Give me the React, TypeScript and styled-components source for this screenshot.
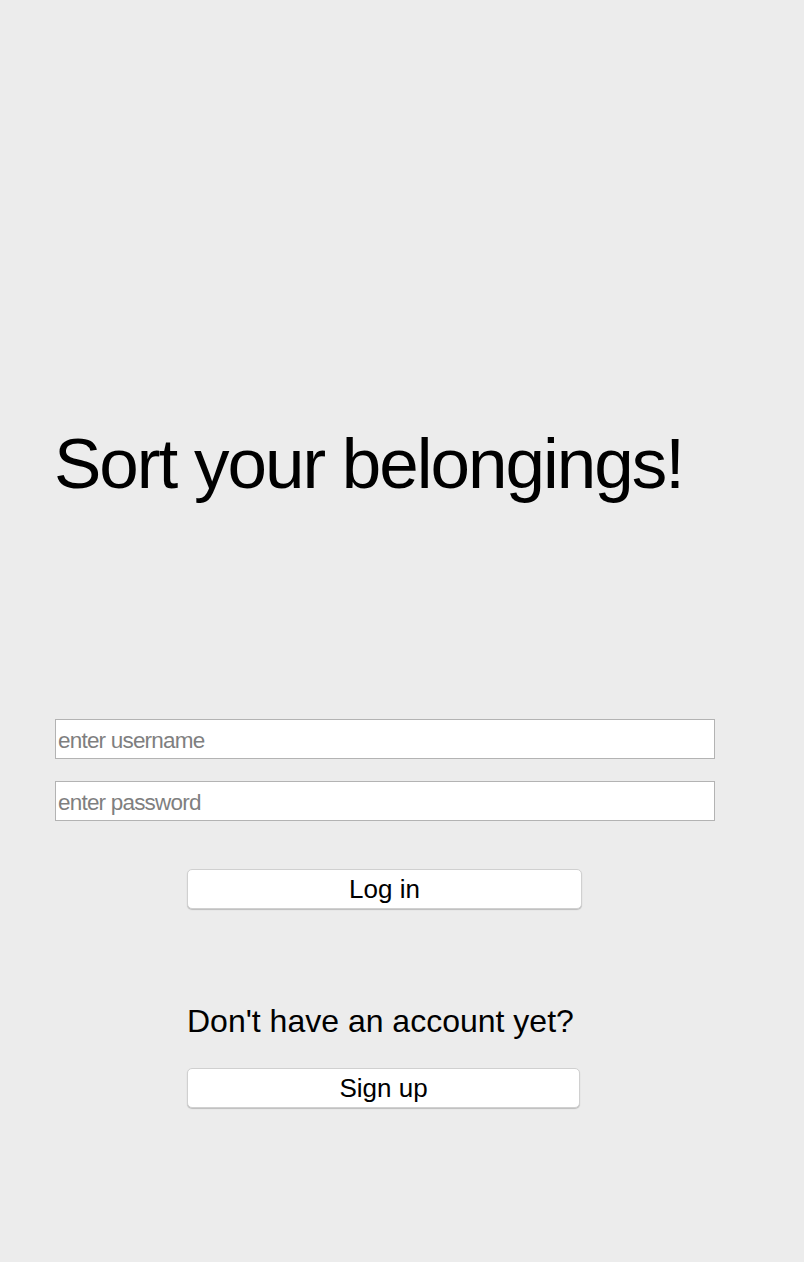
import styled, { createGlobalStyle } from "styled-components";

const GlobalStyle = createGlobalStyle`
  html, body {
    margin: 0;
    padding: 0;
    background: #ececec;
    font-family: "Liberation Sans", Arial, sans-serif;
  }
`;

const App = () => {
  return (
    <>
      <GlobalStyle />
      <Page>
        <Title>Sort your belongings!</Title>
        <Form>
          <Field placeholder="enter username" />
          <Field type="password" placeholder="enter password" />
          <Actions>
            <Button>Log in</Button>
            <Prompt>Don't have an account yet?</Prompt>
            <Button narrow>Sign up</Button>
          </Actions>
        </Form>
      </Page>
    </>
  );
};

export default App;

const Page = styled.div`
  min-height: 1262px;
  box-sizing: border-box;
  padding: 420px 0 0 54px;
`;

const Title = styled.h1`
  margin: 0;
  font-size: 71px;
  font-weight: 400;
  letter-spacing: -2px;
  color: #000;
  line-height: 88px;
`;

const Form = styled.div`
  display: flex;
  flex-direction: column;
  margin-top: 211px;
  padding-left: 1px;
  gap: 22px;
`;

const Field = styled.input`
  width: 660px;
  height: 40px;
  box-sizing: border-box;
  border: 1px solid #b3b3b3;
  background: #fff;
  padding: 3px 2px 0;
  font-family: "Liberation Sans", Arial, sans-serif;
  font-size: 22.5px;
  letter-spacing: -0.8px;
  color: #000;
  outline: none;

  &::placeholder {
    color: #7f7f7f;
  }
`;

const Actions = styled.div`
  display: flex;
  flex-direction: column;
  align-items: flex-start;
  padding-left: 132px;
  margin-top: 26px;
`;

const Button = styled.button<{ narrow?: boolean }>`
  width: ${(p) => (p.narrow ? "393px" : "395px")};
  height: 40px;
  box-sizing: border-box;
  background: #fff;
  border: 1px solid #d0d0d0;
  border-radius: 5px;
  box-shadow: 0 1px 1px rgba(0, 0, 0, 0.2);
  font-family: "Liberation Sans", Arial, sans-serif;
  font-size: 26px;
  color: #000;
  padding: 0;
  cursor: pointer;
`;

const Prompt = styled.p`
  margin: 94px 0 29px;
  font-size: 32px;
  line-height: 36px;
  color: #000;
`;
